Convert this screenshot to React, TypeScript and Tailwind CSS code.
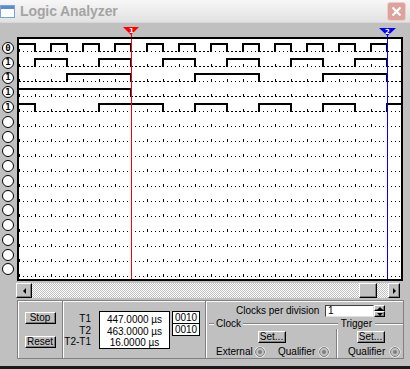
import type { ReactElement } from "react";

const ROWS = 16;
const CW = 382;
const CH = 240;

// 0 = low, 1 = high, per 16px division
function level(row: number, s: number): number | null {
  switch (row) {
    case 0:
      return s % 2 === 0 ? 1 : 0;
    case 1:
      return Math.floor((s + 1) / 2) % 2 === 1 ? 1 : 0;
    case 2:
      return Math.floor((s + 1) / 4) % 2 === 1 ? 1 : 0;
    case 3:
      return s < 7 ? 1 : 0;
    case 4:
      if (s === 0) return 1;
      if (s < 5) return 0;
      if (s < 9) return 1;
      return Math.floor((s - 9) / 2) % 2 === 0 ? 0 : 1;
    default:
      return null;
  }
}

function highPath(row: number) {
  const top = row * 15 + 5;
  const bottom = row * 15 + 12;
  let d = "";
  for (let s = 0; s < 24; s++) {
    const v = level(row, s);
    const prev = s > 0 ? level(row, s - 1) : v;
    const x0 = s * 16;
    const x1 = Math.min((s + 1) * 16, CW);
    if (v) d += ` M${x0} ${top} H${x1}`;
    if (s > 0 && v !== prev) d += ` M${x0} ${top} V${bottom}`;
  }
  return d.trim();
}

function lowPath(row: number) {
  const y = row * 15 + 12.5;
  let d = "";
  for (let s = 0; s < 24; s++) {
    if (level(row, s) === 0) d += ` M${s * 16} ${y} H${Math.min((s + 1) * 16, CW)}`;
  }
  return d.trim();
}

function Waveforms() {
  const grid: ReactElement[] = [];
  for (let r = 0; r < ROWS; r++) {
    const y = r * 15 + 12;
    for (let x = 0; x < CW; x += 4) {
      if (x % 16 === 0) grid.push(<rect key={`t${r}-${x}`} x={x} y={y - 2} width={1} height={3} />);
      else grid.push(<rect key={`d${r}-${x}`} x={x} y={y} width={1} height={1} />);
    }
  }
  return (
    <svg width={CW} height={CH} className="block" shapeRendering="crispEdges">
      <g fill="#000">{grid}</g>
      {[0, 1, 2, 3, 4].map((r) => (
        <g key={r}>
          <path d={highPath(r)} fill="none" stroke="#000" strokeWidth={2} strokeLinecap="square" />
          <path d={lowPath(r)} fill="none" stroke="#000" strokeWidth={1} strokeDasharray="2 2" />
        </g>
      ))}
      <rect x={112} y={0} width={1} height={CH} fill="#ff0000" />
      <rect x={368} y={0} width={1} height={CH} fill="#0000ff" />
    </svg>
  );
}

function CursorStrip() {
  return (
    <svg width={410} height={14} className="block shrink-0">
      <polygon points="123,4 139,4 131,12" fill="#ff0000" />
      <rect x={131} y={10} width={1} height={4} fill="#ff0000" />
      <text x={131.5} y={10} fontSize={7} fontWeight={700} fill="#fff" textAnchor="middle" fontFamily="'DejaVu Sans', sans-serif">1</text>
      <polygon points="379,5 396,5 387.5,13" fill="#0000ff" />
      <rect x={387} y={11} width={1} height={3} fill="#0000ff" />
      <text x={387.5} y={11} fontSize={7} fontWeight={700} fill="#fff" textAnchor="middle" fontFamily="'DejaVu Sans', sans-serif">2</text>
    </svg>
  );
}

function Indicators() {
  const vals = ["0", "1", "1", "1", "1"];
  return (
    <div className="w-[17px] shrink-0 flex flex-col pl-[2px] pt-[5px] gap-[2.75px]">
      {Array.from({ length: ROWS }).map((_, i) => (
        <div
          key={i}
          className="w-[12px] h-[12px] rounded-full border border-black bg-white flex items-center justify-center text-[9px] font-bold leading-none font-['DejaVu_Sans_Mono',monospace]"
        >
          {vals[i] ?? ""}
        </div>
      ))}
    </div>
  );
}

const raised =
  "bg-[#c0c0c0] border border-t-white border-l-white border-b-black border-r-black shadow-[inset_-1px_-1px_0_#808080]";

function Arrow({ dir }: { dir: "left" | "right" | "up" | "down" }) {
  const pts = {
    left: "3,0 3,6 0,3",
    right: "0,0 0,6 3,3",
    up: "0,3 6,3 3,0",
    down: "0,0 6,0 3,3",
  }[dir];
  const w = dir === "left" || dir === "right" ? 3 : 6;
  const h = dir === "left" || dir === "right" ? 6 : 3;
  return (
    <svg width={w} height={h} className="block">
      <polygon points={pts} fill="#000" />
    </svg>
  );
}

function ScrollBar() {
  return (
    <div className="mt-[2px] h-[15px] flex pl-[16px] shrink-0">
      <div className={`w-[16px] h-[15px] flex items-center justify-center ${raised}`}>
        <Arrow dir="left" />
      </div>
      <div className="w-[356px] h-[15px] flex justify-end pr-[11px] bg-[repeating-conic-gradient(#c0c0c0_0%_25%,#ffffff_0%_50%)] bg-[length:2px_2px]">
        <div className={`w-[18px] h-[15px] ${raised}`} />
      </div>
      <div className={`w-[12px] h-[15px] flex items-center justify-center ${raised}`}>
        <Arrow dir="right" />
      </div>
    </div>
  );
}

function Radio() {
  return (
    <svg width={12} height={12} className="block">
      <circle cx={6} cy={6} r={5.5} fill="#ffffff" />
      <circle cx={6} cy={6} r={4.5} fill="#c0c0c0" stroke="#808080" strokeWidth={1} />
      <circle cx={6} cy={6} r={2} fill="#808080" />
    </svg>
  );
}

function Etch({ className = "" }: { className?: string }) {
  return <div className={`h-[2px] border-t border-t-[#808080] border-b border-b-white ${className}`} />;
}

function ControlPanel() {
  return (
    <div className="mt-[2px] ml-[17px] w-[387px] h-[59px] shrink-0 flex border border-[#808080] shadow-[inset_1px_1px_0_#ffffff] text-[10px] leading-none">
      <div className="w-[45px] flex flex-col items-center pt-[11px] gap-[12px] border-r border-r-[#808080] shadow-[1px_0_0_#ffffff]">
        <button className={`w-[31px] h-[12px] flex items-center justify-center ${raised}`}>Stop</button>
        <button className={`w-[31px] h-[12px] flex items-center justify-center ${raised}`}>Reset</button>
      </div>
      <div className="w-[142px] flex pt-[10px] border-r border-r-[#808080] shadow-[1px_0_0_#ffffff] ml-px">
        <div className="w-[27px] flex flex-col items-end pt-[2px] leading-[11.5px]">
          <span>T1</span>
          <span>T2</span>
          <span>T2-T1</span>
        </div>
        <div className="ml-[8px] w-[71px] h-[38px] border border-black bg-white flex flex-col items-center pt-[2px] leading-[11.5px]">
          <span>447.0000 µs</span>
          <span>463.0000 µs</span>
          <span>16.0000 µs</span>
        </div>
        <div className="ml-[2px] w-[28px] flex flex-col">
          <div className="h-[13px] border border-black bg-white flex items-center justify-center">0010</div>
          <div className="h-[13px] -mt-px border border-black bg-white flex items-center justify-center">0010</div>
        </div>
      </div>
      <div className="flex-1 flex flex-col ml-px">
        <div className="flex items-center pl-[29px] pt-[4px] h-[16px]">
          <span className="w-[89px]">Clocks per division</span>
          <div className="w-[49px] h-[12px] bg-white border border-t-[#404040] border-l-[#404040] border-b-[#e0e0e0] border-r-[#e0e0e0] flex items-center pl-[2px]">
            1
          </div>
          <div className="w-[11px] h-[12px] flex flex-col">
            <div className={`h-[6px] flex items-center justify-center ${raised}`}>
              <Arrow dir="up" />
            </div>
            <div className={`h-[6px] flex items-center justify-center ${raised}`}>
              <Arrow dir="down" />
            </div>
          </div>
        </div>
        <div className="flex items-center h-[11px] mt-[1px] pl-[2px]">
          <Etch className="w-[5px]" />
          <span className="px-[2px]">Clock</span>
          <Etch className="flex-1" />
          <span className="px-[3px]">Trigger</span>
          <Etch className="w-[28px]" />
        </div>
        <div className="flex flex-1">
          <div className="w-[130px] flex flex-col items-center border-r border-r-[#808080] shadow-[1px_0_0_#ffffff]">
            <button className={`w-[28px] h-[12px] mt-[2px] flex items-center justify-center ${raised}`}>Set...</button>
            <div className="w-full flex items-center pl-[9px] mt-[3px] h-[12px]">
              <span className="w-[38px]">External</span>
              <Radio />
              <span className="ml-[12px] w-[40px]">Qualifier</span>
              <Radio />
            </div>
          </div>
          <div className="flex-1 flex flex-col items-center ml-px">
            <button className={`w-[28px] h-[12px] mt-[2px] flex items-center justify-center ${raised}`}>Set...</button>
            <div className="w-full flex items-center pl-[10px] mt-[3px] h-[12px]">
              <span className="w-[41px]">Qualifier</span>
              <Radio />
            </div>
          </div>
        </div>
      </div>
    </div>
  );
}

function TitleBar() {
  return (
    <div className="h-[23px] shrink-0 flex items-center bg-gradient-to-b from-[#f7f7f7] to-[#e2e2e2] border-b border-b-[#d8d8d8]">
      <svg width={15} height={13} className="block">
        <rect x={0.5} y={0.5} width={14} height={12} fill="#ffffff" stroke="#7aa2da" />
        <rect x={1} y={1} width={13} height={3} fill="#5b8ad4" />
      </svg>
      <span className="ml-[5px] text-[14px] font-bold text-[#a4a4a4] tracking-[-0.1px]">Logic Analyzer</span>
      <div className="ml-auto mr-[4px] w-[19px] h-[19px] rounded-[3px] bg-[#dba29e] border border-[#efcdca] flex items-center justify-center">
        <svg width={11} height={11}>
          <path d="M1.5 1.5 L9.5 9.5 M9.5 1.5 L1.5 9.5" stroke="#fff" strokeWidth={2.2} />
        </svg>
      </div>
    </div>
  );
}

export default function App() {
  return (
    <div className="w-[410px] h-[369px] overflow-hidden bg-[#c0c0c0] flex flex-col font-['Liberation_Sans',Arial,sans-serif] text-black select-none">
      <TitleBar />
      <CursorStrip />
      <div className="flex h-[244px] shrink-0">
        <Indicators />
        <div className="w-[386px] h-[244px] border-2 border-black bg-white">
          <Waveforms />
        </div>
      </div>
      <ScrollBar />
      <ControlPanel />
      <div className="flex-1" />
      <div className="h-[3px] bg-[#1a1a1a] shrink-0" />
    </div>
  );
}
